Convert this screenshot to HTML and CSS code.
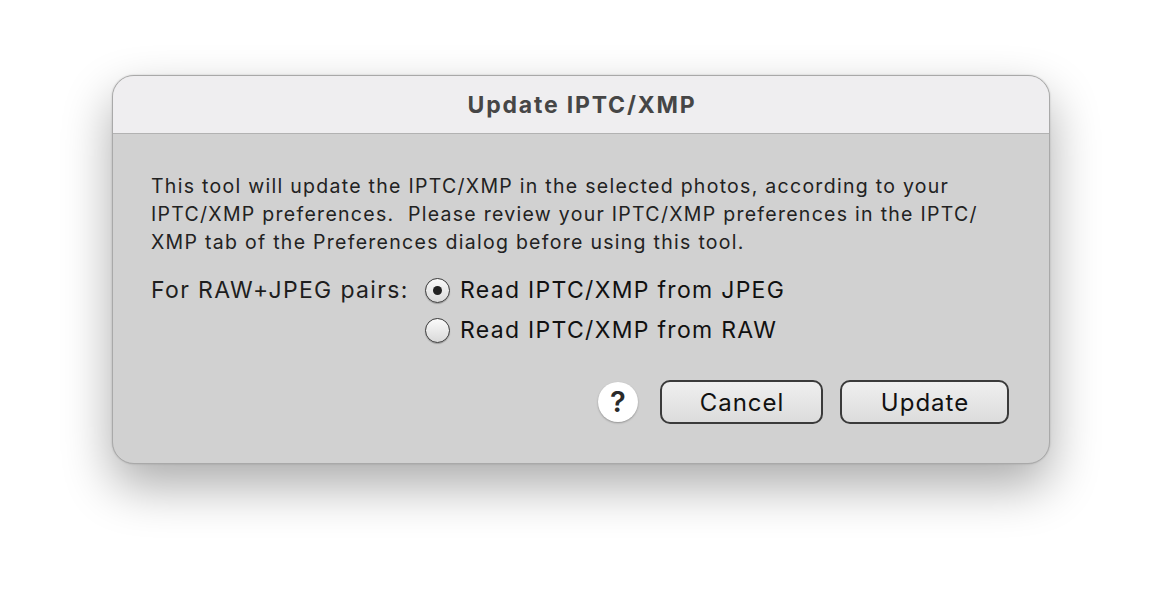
FILE: index.html
```html
<!DOCTYPE html>
<html>
<head>
<meta charset="utf-8">
<link rel="stylesheet" href="styles.css">
</head>
<body>
<div class="dialog">
  <div class="titlebar">Update IPTC/XMP</div>
  <div class="content">
    <p class="info">This tool will update the IPTC/XMP in the selected photos, according to your<br>IPTC/XMP preferences.&nbsp; Please review your IPTC/XMP preferences in the IPTC/<br>XMP tab of the Preferences dialog before using this tool.</p>
    <div class="options">
      <div class="label">For RAW+JPEG pairs:</div>
      <div class="radios">
        <div class="radio-row"><span class="radio checked"></span><span class="rtext">Read IPTC/XMP from JPEG</span></div>
        <div class="radio-row"><span class="radio"></span><span class="rtext">Read IPTC/XMP from RAW</span></div>
      </div>
    </div>
    <div class="buttons">
      <div class="help">?</div>
      <div class="btn cancel">Cancel</div>
      <div class="btn update">Update</div>
    </div>
  </div>
</div>
</body>
</html>
```
FILE: styles.css
```css
html, body {
  margin: 0;
  padding: 0;
  background: #ffffff;
  width: 1162px;
  height: 612px;
  overflow: hidden;
}
body {
  font-family: Inter, "Liberation Sans", Arial, sans-serif;
}
.dialog {
  margin: 75px 0 0 112px;
  width: 938px;
  height: 389px;
  box-sizing: border-box;
  border: 1px solid #a9a9a9;
  border-radius: 22px;
  background: #d1d1d1;
  overflow: hidden;
  box-shadow: 0 22px 50px rgba(0, 0, 0, 0.33), 0 0 2px rgba(0,0,0,0.2);
}
.titlebar {
  height: 56px;
  background: #efeef0;
  border-bottom: 1px solid #b2b2b2;
  display: flex;
  align-items: center;
  justify-content: center;
  font-weight: 700;
  font-size: 23px;
  letter-spacing: 1.8px;
  color: #464646;
  padding: 1px 0 0 2px;
  box-sizing: content-box;
}
.content {
  padding: 38px 40px 0 38px;
}
.info {
  margin: 0;
  font-size: 19.5px;
  letter-spacing: 1.28px;
  line-height: 28px;
  color: #222222;
  white-space: nowrap;
}
.options {
  display: flex;
  margin-top: 16px;
}
.label {
  font-size: 23px;
  letter-spacing: 1.35px;
  line-height: 36px;
  color: #1e1e1e;
  width: 274px;
  white-space: nowrap;
}
.radios {
  display: flex;
  flex-direction: column;
  gap: 4px;
}
.radio-row {
  display: flex;
  align-items: center;
  height: 36px;
}
.radio {
  width: 25px;
  height: 25px;
  box-sizing: border-box;
  border-radius: 50%;
  border: 1.5px solid #3a3a3a;
  background: linear-gradient(#fbfbfb, #d9d9d9);
  box-shadow: 0 1px 1px rgba(0,0,0,0.25);
  display: flex;
  align-items: center;
  justify-content: center;
  margin: 0 10px 0 0;
}
.radio.checked::after {
  content: "";
  width: 9px;
  height: 9px;
  border-radius: 50%;
  background: #222;
}
.rtext {
  font-size: 23px;
  letter-spacing: 1.3px;
  color: #111;
  white-space: nowrap;
}
.buttons {
  display: flex;
  justify-content: flex-end;
  align-items: center;
  margin-top: 32px;
}
.help {
  width: 40px;
  height: 40px;
  border-radius: 50%;
  background: #fff;
  box-shadow: 0 1px 2px rgba(0,0,0,0.3);
  display: flex;
  align-items: center;
  justify-content: center;
  font-size: 29px;
  font-weight: 600;
  color: #2a2a2a;
  margin-right: 22px;
  padding-bottom: 1px;
  box-sizing: border-box;
}
.btn {
  height: 44px;
  box-sizing: border-box;
  border: 2px solid #3a3a3a;
  border-radius: 10px;
  background: linear-gradient(#efefef, #dcdcdc);
  display: flex;
  align-items: center;
  justify-content: center;
  font-size: 24px;
  letter-spacing: 1px;
  color: #111;
  padding-left: 1px;
}
.cancel {
  width: 163px;
  margin-right: 17px;
}
.update {
  width: 169px;
}
```
